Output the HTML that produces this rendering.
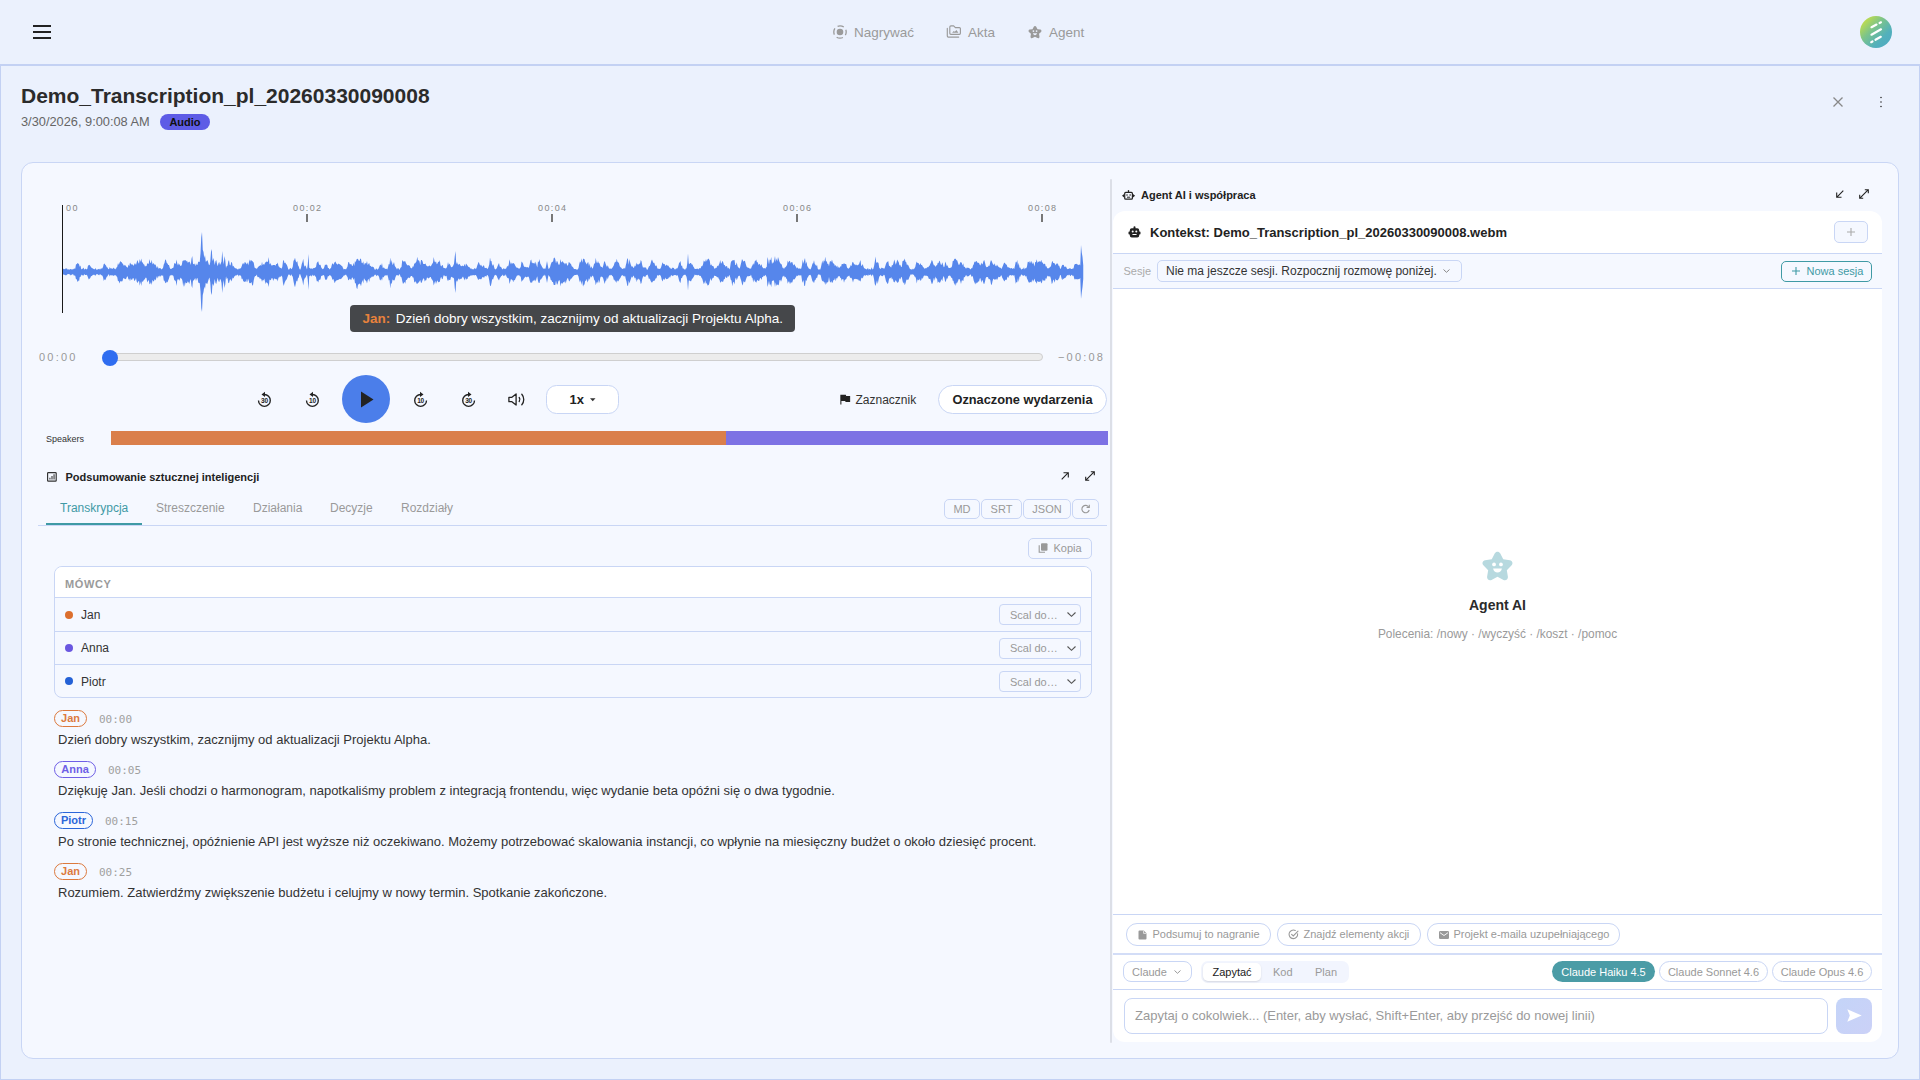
<!DOCTYPE html>
<html lang="pl">
<head>
<meta charset="utf-8">
<title>Demo_Transcription_pl_20260330090008</title>
<style>
*{box-sizing:border-box;margin:0;padding:0}
html,body{width:1920px;height:1080px;overflow:hidden;background:#ebf1fd}
body{font-family:"Liberation Sans",sans-serif;color:#333;position:relative}
.a{position:absolute;white-space:nowrap}
.mono{font-family:"Liberation Mono",monospace}
.dmono{font-family:"DejaVu Sans Mono","Liberation Mono",monospace}
svg{position:absolute;overflow:visible}
.ln{position:absolute;background:#c9d6f5}
.btn{position:absolute;border:1px solid #c9d6f5;background:#f5f8ff;color:#999;display:flex;align-items:center;justify-content:center;white-space:nowrap}
</style>
</head>
<body>
<!-- TOP BAR -->
<div class="a" id="topbar" style="left:0;top:0;width:1920px;height:65px;background:#ebf1fd"></div>
<div class="a" style="left:0;top:64px;width:1920px;height:2px;background:#c3d1f3"></div>
<!-- page frame -->
<div class="a" style="left:0;top:65px;width:1920px;height:1015px;border:1px solid #c3d1f3;border-top:none"></div>

<!-- hamburger -->
<div class="a" style="left:33px;top:25px;width:18px;height:2px;background:#222"></div>
<div class="a" style="left:33px;top:31px;width:18px;height:2px;background:#222"></div>
<div class="a" style="left:33px;top:37px;width:18px;height:2px;background:#222"></div>
<!-- nav -->
<svg style="left:833px;top:25.100px" width="14" height="14" viewBox="0 0 14 14"><circle cx="7" cy="7" r="6.200" fill="none" stroke="#9a9a9a" stroke-width="1.300" stroke-dasharray="6.500 3.240" stroke-dashoffset="3.250"/><circle cx="7" cy="7" r="3.300" fill="#9a9a9a"/></svg>
<div class="a" style="left:854px;top:24px;font-size:13.500px;line-height:17px;color:#9a9a9a">Nagrywać</div>
<svg style="left:946px;top:24px" width="16" height="14" viewBox="0 0 16 14" fill="none" stroke="#9a9a9a" stroke-width="1.150" stroke-linejoin="round" stroke-linecap="round"><path d="M3.800,3 Q3.800,1.800 5,1.800 L7.600,1.800 L9.400,3.600 L13.400,3.600 Q14.400,3.600 14.400,4.600 L14.400,9.300 Q14.400,10.300 13.400,10.300 L4.800,10.300 Q3.800,10.300 3.800,9.300 Z"/><path d="M1.300,4.400 L1.300,12.100 Q1.300,13.100 2.300,13.100 L12.700,13.100"/><path d="M6.100,8.700 L7.800,6.900 L8.800,7.800 L10.400,6.100 L12.400,8.700Z" fill="#9a9a9a" stroke="none"/></svg>
<div class="a" style="left:968px;top:24px;font-size:13.500px;line-height:17px;color:#9a9a9a">Akta</div>
<svg style="left:1028px;top:25px" width="14" height="14" viewBox="0 0 24 24"><path d="M12 1.5c.9 0 1.7.5 2.100 1.300l2.200 4.300 4.800.7c1.900.3 2.700 2.600 1.300 4l-3.500 3.400.8 4.800c.3 1.900-1.700 3.300-3.400 2.400L12 20.200l-4.300 2.200c-1.700.9-3.700-.5-3.400-2.400l.8-4.800-3.500-3.400c-1.400-1.400-.6-3.700 1.300-4l4.800-.7 2.200-4.300c.4-.8 1.200-1.300 2.100-1.300z" fill="#9a9a9a"/><circle cx="9.300" cy="10.300" r="1.500" fill="#ebf1fd"/><circle cx="14.700" cy="10.300" r="1.500" fill="#ebf1fd"/><path d="M8.500 14.200h7c-.3 1.900-1.800 3.200-3.500 3.200s-3.200-1.300-3.500-3.200z" fill="#ebf1fd"/></svg>
<div class="a" style="left:1049px;top:24px;font-size:13.500px;line-height:17px;color:#9a9a9a">Agent</div>
<!-- avatar -->
<div class="a" style="left:1860px;top:16px;width:32px;height:32px;border-radius:50%;background:linear-gradient(135deg,#d4e43a 5%,#7cc48a 40%,#52b0bc 70%,#4fa9c4 100%)"></div>
<svg style="left:1860px;top:16px" width="32" height="32" viewBox="0 0 32 32" stroke="#fff" stroke-width="2.200" stroke-linecap="round" fill="none"><path d="M11.500 11.200L16.500 8.600M19.600 7L21 6.300M11.500 18.700L21 13.300M11.200 26.200L12.500 25.500M15.500 23.800L20.800 20.800"/></svg>

<div class="a" style="left:21px;top:83px;font-size:21px;line-height:26px;font-weight:bold;color:#2b2b2b">Demo_Transcription_pl_20260330090008</div>
<div class="a" style="left:21px;top:114px;font-size:12.800px;line-height:16px;color:#666">3/30/2026, 9:00:08 AM</div>
<div class="a" style="left:159.700px;top:114.200px;width:50.600px;height:16.200px;border-radius:8.100px;background:#5e5ce6;color:#111;font-size:11px;line-height:16.200px;font-weight:bold;text-align:center">Audio</div>
<svg style="left:1833px;top:97px" width="10" height="10" viewBox="0 0 10 10" stroke="#888" stroke-width="1.3" fill="none"><path d="M0.500 0.500L9.500 9.500M9.500 0.500L0.500 9.500"/></svg>
<svg style="left:1879px;top:96px" width="4" height="12" viewBox="0 0 4 12" fill="#333"><circle cx="2" cy="1.500" r="0.800"/><circle cx="2" cy="6" r="0.800"/><circle cx="2" cy="10.500" r="0.800"/></svg>

<!-- main card -->
<div class="a" style="left:21px;top:162.400px;width:1878px;height:896.600px;background:#f5f8ff;border:1px solid #c9d6f5;border-radius:12px"></div>
<!-- timeline -->
<div class="a" style="left:66px;top:203px;font-size:9px;line-height:11px;color:#888;letter-spacing:1.400px">00</div>
<div class="a" style="left:293px;top:203px;font-size:9px;line-height:11px;color:#888;letter-spacing:1.400px">00:02</div>
<div class="a" style="left:538px;top:203px;font-size:9px;line-height:11px;color:#888;letter-spacing:1.400px">00:04</div>
<div class="a" style="left:783px;top:203px;font-size:9px;line-height:11px;color:#888;letter-spacing:1.400px">00:06</div>
<div class="a" style="left:1028px;top:203px;font-size:9px;line-height:11px;color:#888;letter-spacing:1.400px">00:08</div>
<div class="a" style="left:306.2px;top:214px;width:1.500px;height:8px;background:#777"></div>
<div class="a" style="left:551.2px;top:214px;width:1.500px;height:8px;background:#777"></div>
<div class="a" style="left:796.2px;top:214px;width:1.500px;height:8px;background:#777"></div>
<div class="a" style="left:1041.2px;top:214px;width:1.500px;height:8px;background:#777"></div>
<svg style="left:0;top:0" width="1920" height="400" viewBox="0 0 1920 400"><path fill="#5686eb" d="M62.5,269.1 63.25,268.8 64,269.1 64.75,269.3 65.5,268.5 66.25,268.4 67,268.6 67.75,269.8 68.5,269.3 69.25,269.7 70,269.3 70.75,269.0 71.5,269.5 72.25,269.3 73,269.4 73.75,268.8 74.5,268.6 75.25,268.7 76,264.3 76.75,264.2 77.5,262.9 78.25,263.5 79,264.2 79.75,266.7 80.5,265.6 81.25,269.6 82,268.8 82.75,268.7 83.5,267.4 84.25,269.4 85,269.3 85.75,268.6 86.5,269.5 87.25,269.1 88,265.5 88.75,265.2 89.5,264.7 90.25,265.9 91,266.9 91.75,268.0 92.5,268.2 93.25,268.8 94,269.3 94.75,269.2 95.5,267.9 96.25,269.8 97,269.5 97.75,269.6 98.5,269.0 99.25,268.8 100,269.7 100.75,268.5 101.5,268.5 102.25,268.6 103,266.9 103.75,263.9 104.5,263.4 105.25,264.7 106,265.6 106.75,267.2 107.5,267.6 108.25,269.1 109,269.2 109.75,267.1 110.5,268.5 111.25,268.3 112,268.8 112.75,268.7 113.5,267.5 114.25,269.1 115,268.2 115.75,269.4 116.5,267.6 117.25,266.7 118,263.1 118.75,265.0 119.5,262.9 120.25,261.1 121,261.9 121.75,262.2 122.5,263.4 123.25,264.5 124,266.0 124.75,264.8 125.5,265.5 126.25,266.6 127,267.3 127.75,267.8 128.5,264.6 129.25,266.2 130,262.6 130.75,263.8 131.5,264.4 132.25,264.4 133,264.7 133.75,266.0 134.5,263.5 135.25,263.4 136,265.1 136.75,262.2 137.5,260.0 138.25,262.6 139,263.8 139.75,259.1 140.5,261.9 141.25,258.4 142,262.2 142.75,262.6 143.5,264.2 144.25,264.6 145,266.7 145.75,265.7 146.5,266.3 147.25,263.0 148,264.1 148.75,263.5 149.5,259.0 150.25,262.7 151,262.9 151.75,259.8 152.5,264.4 153.25,263.1 154,264.0 154.75,264.8 155.5,264.6 156.25,266.5 157,268.2 157.75,266.0 158.5,268.7 159.25,268.2 160,268.1 160.75,268.4 161.5,269.4 162.25,268.7 163,268.1 163.75,264.6 164.5,263.1 165.25,259.3 166,260.2 166.75,263.0 167.5,263.6 168.25,265.0 169,265.0 169.75,267.7 170.5,269.0 171.25,268.9 172,268.3 172.75,268.1 173.5,267.4 174.25,263.2 175,263.2 175.75,264.0 176.5,259.5 177.25,263.5 178,265.5 178.75,263.2 179.5,264.4 180.25,265.7 181,266.1 181.75,265.1 182.5,261.0 183.25,260.5 184,260.4 184.75,260.3 185.5,260.1 186.25,261.4 187,260.5 187.75,262.8 188.5,262.3 189.25,261.4 190,262.5 190.75,264.9 191.5,258.8 192.25,256.0 193,263.7 193.75,264.3 194.5,263.4 195.25,266.3 196,263.3 196.75,265.0 197.5,264.8 198.25,261.4 199,262.0 199.75,261.7 200.5,253.2 201.25,237.2 202,232.0 202.75,249.8 203.5,252.0 204.25,258.0 205,255.0 205.75,261.7 206.5,261.2 207.25,260.0 208,261.6 208.75,264.4 209.5,265.3 210.25,262.1 211,251.7 211.75,249.0 212.5,261.3 213.25,258.0 214,260.7 214.75,265.1 215.5,261.2 216.25,260.0 217,263.7 217.75,266.2 218.5,262.9 219.25,262.0 220,265.0 220.75,263.6 221.5,261.5 222.25,251.0 223,259.8 223.75,264.4 224.5,256.0 225.25,259.9 226,267.9 226.75,266.1 227.5,265.8 228.25,261.4 229,260.0 229.75,265.1 230.5,265.5 231.25,261.9 232,262.5 232.75,266.5 233.5,265.8 234.25,267.6 235,267.7 235.75,268.4 236.5,268.6 237.25,269.0 238,269.7 238.75,268.5 239.5,268.7 240.25,268.4 241,268.0 241.75,266.0 242.5,263.8 243.25,263.0 244,264.4 244.75,262.1 245.5,262.5 246.25,263.4 247,264.5 247.75,262.2 248.5,265.6 249.25,259.3 250,262.1 250.75,260.1 251.5,260.5 252.25,260.9 253,261.8 253.75,262.8 254.5,267.2 255.25,268.6 256,267.8 256.75,269.2 257.5,267.8 258.25,267.1 259,266.0 259.75,265.7 260.5,265.0 261.25,266.1 262,261.7 262.75,265.3 263.5,264.1 264.25,264.8 265,263.0 265.75,261.9 266.5,261.4 267.25,262.1 268,261.4 268.75,256.9 269.5,264.6 270.25,263.1 271,264.4 271.75,265.7 272.5,265.2 273.25,264.9 274,265.0 274.75,265.1 275.5,265.7 276.25,263.9 277,263.9 277.75,262.6 278.5,266.3 279.25,266.8 280,267.9 280.75,267.7 281.5,268.8 282.25,266.9 283,261.2 283.75,259.8 284.5,263.2 285.25,262.5 286,263.8 286.75,264.7 287.5,266.5 288.25,269.3 289,269.7 289.75,268.5 290.5,267.8 291.25,269.2 292,268.5 292.75,266.7 293.5,260.7 294.25,259.9 295,257.7 295.75,260.9 296.5,262.6 297.25,261.0 298,265.2 298.75,266.6 299.5,269.1 300.25,269.7 301,267.8 301.75,263.9 302.5,262.1 303.25,258.7 304,265.0 304.75,266.7 305.5,265.2 306.25,267.5 307,269.4 307.75,264.4 308.5,254.0 309.25,267.8 310,268.3 310.75,268.7 311.5,268.2 312.25,269.3 313,268.1 313.75,268.2 314.5,268.1 315.25,267.4 316,267.1 316.75,262.9 317.5,262.1 318.25,261.2 319,264.6 319.75,264.9 320.5,264.7 321.25,267.5 322,268.5 322.75,269.3 323.5,268.8 324.25,267.3 325,264.4 325.75,265.1 326.5,264.5 327.25,265.1 328,267.9 328.75,268.1 329.5,269.4 330.25,268.6 331,268.0 331.75,264.9 332.5,263.0 333.25,264.8 334,263.5 334.75,262.1 335.5,261.6 336.25,263.4 337,264.1 337.75,264.7 338.5,263.5 339.25,264.0 340,264.4 340.75,265.1 341.5,265.8 342.25,266.3 343,268.0 343.75,269.4 344.5,269.1 345.25,268.9 346,269.5 346.75,267.9 347.5,266.5 348.25,262.2 349,262.1 349.75,264.3 350.5,264.2 351.25,263.9 352,265.7 352.75,265.9 353.5,262.8 354.25,265.9 355,260.8 355.75,262.6 356.5,259.4 357.25,258.7 358,259.1 358.75,260.8 359.5,260.9 360.25,258.4 361,258.9 361.75,263.1 362.5,263.3 363.25,261.3 364,265.2 364.75,263.3 365.5,263.3 366.25,263.4 367,261.0 367.75,265.3 368.5,263.8 369.25,263.1 370,266.0 370.75,265.8 371.5,267.1 372.25,266.5 373,267.1 373.75,267.3 374.5,269.2 375.25,270.0 376,268.5 376.75,268.7 377.5,269.7 378.25,269.0 379,267.4 379.75,265.4 380.5,264.6 381.25,265.7 382,263.1 382.75,268.0 383.5,267.5 384.25,267.7 385,268.9 385.75,268.7 386.5,268.7 387.25,269.6 388,267.2 388.75,263.9 389.5,264.4 390.25,257.6 391,263.3 391.75,260.0 392.5,264.9 393.25,263.9 394,261.9 394.75,265.8 395.5,267.1 396.25,268.0 397,269.4 397.75,268.1 398.5,268.2 399.25,269.9 400,268.8 400.75,267.4 401.5,266.9 402.25,260.1 403,261.0 403.75,261.7 404.5,261.3 405.25,261.2 406,263.3 406.75,264.6 407.5,265.5 408.25,264.9 409,265.5 409.75,265.8 410.5,267.8 411.25,268.2 412,268.3 412.75,266.3 413.5,266.7 414.25,263.4 415,263.6 415.75,262.6 416.5,261.3 417.25,256.7 418,260.7 418.75,259.9 419.5,261.4 420.25,265.2 421,260.1 421.75,260.1 422.5,261.2 423.25,264.1 424,264.1 424.75,264.0 425.5,263.5 426.25,265.4 427,266.0 427.75,266.4 428.5,266.2 429.25,265.5 430,265.8 430.75,266.4 431.5,265.0 432.25,263.7 433,262.4 433.75,257.1 434.5,261.3 435.25,262.4 436,261.3 436.75,264.3 437.5,263.4 438.25,261.6 439,262.3 439.75,259.9 440.5,265.3 441.25,266.5 442,265.3 442.75,265.0 443.5,268.0 444.25,268.1 445,268.3 445.75,268.4 446.5,268.0 447.25,265.9 448,262.1 448.75,264.9 449.5,263.6 450.25,264.9 451,267.0 451.75,267.2 452.5,266.7 453.25,265.6 454,263.8 454.75,256.5 455.5,251.0 456.25,264.2 457,262.0 457.75,264.2 458.5,264.7 459.25,263.8 460,264.6 460.75,265.9 461.5,266.3 462.25,265.4 463,266.0 463.75,266.3 464.5,263.7 465.25,266.4 466,263.5 466.75,264.6 467.5,265.4 468.25,266.7 469,267.0 469.75,267.6 470.5,268.7 471.25,268.2 472,269.4 472.75,269.1 473.5,269.4 474.25,268.6 475,268.1 475.75,269.2 476.5,267.9 477.25,265.5 478,263.4 478.75,261.7 479.5,264.0 480.25,265.8 481,264.4 481.75,266.0 482.5,267.0 483.25,265.6 484,265.5 484.75,267.9 485.5,267.9 486.25,267.8 487,268.4 487.75,268.9 488.5,266.9 489.25,264.5 490,257.4 490.75,261.3 491.5,260.9 492.25,265.9 493,264.0 493.75,265.6 494.5,268.4 495.25,269.5 496,269.1 496.75,268.3 497.5,266.2 498.25,264.6 499,262.9 499.75,266.5 500.5,266.8 501.25,267.2 502,268.8 502.75,269.4 503.5,268.0 504.25,269.3 505,268.3 505.75,269.2 506.5,267.8 507.25,265.7 508,266.7 508.75,264.4 509.5,259.3 510.25,262.4 511,264.5 511.75,262.6 512.5,263.8 513.25,262.9 514,263.6 514.75,264.6 515.5,266.3 516.25,267.1 517,268.3 517.75,267.6 518.5,268.6 519.25,268.8 520,268.1 520.75,267.0 521.5,261.4 522.25,262.3 523,263.5 523.75,266.1 524.5,267.0 525.25,266.8 526,267.2 526.75,267.2 527.5,267.0 528.25,267.9 529,267.1 529.75,264.3 530.5,260.5 531.25,259.4 532,263.6 532.75,262.4 533.5,263.4 534.25,262.4 535,264.3 535.75,261.6 536.5,265.1 537.25,267.4 538,261.0 538.75,262.6 539.5,259.1 540.25,263.5 541,264.7 541.75,266.2 542.5,267.4 543.25,269.0 544,268.0 544.75,269.1 545.5,268.6 546.25,265.1 547,261.0 547.75,265.1 548.5,269.0 549.25,268.6 550,267.3 550.75,264.5 551.5,262.4 552.25,261.8 553,261.7 553.75,258.0 554.5,257.4 555.25,259.0 556,263.4 556.75,261.1 557.5,261.4 558.25,263.7 559,265.3 559.75,263.8 560.5,258.9 561.25,262.5 562,262.1 562.75,260.9 563.5,262.8 564.25,262.9 565,264.4 565.75,262.9 566.5,263.3 567.25,265.6 568,265.4 568.75,262.1 569.5,262.4 570.25,263.4 571,264.0 571.75,266.3 572.5,266.7 573.25,267.5 574,269.0 574.75,268.9 575.5,269.0 576.25,269.5 577,269.4 577.75,269.4 578.5,268.0 579.25,264.1 580,261.3 580.75,262.8 581.5,258.3 582.25,262.7 583,259.3 583.75,258.6 584.5,259.2 585.25,261.9 586,262.9 586.75,264.6 587.5,262.7 588.25,261.9 589,266.3 589.75,263.2 590.5,268.2 591.25,266.2 592,267.7 592.75,268.7 593.5,266.0 594.25,263.2 595,263.8 595.75,257.8 596.5,262.3 597.25,263.3 598,261.1 598.75,263.0 599.5,263.3 600.25,265.8 601,267.0 601.75,266.8 602.5,267.9 603.25,265.6 604,262.3 604.75,261.0 605.5,263.5 606.25,265.6 607,267.0 607.75,265.2 608.5,267.3 609.25,268.9 610,268.0 610.75,268.9 611.5,268.7 612.25,268.0 613,266.7 613.75,265.4 614.5,263.0 615.25,261.6 616,262.4 616.75,258.8 617.5,262.1 618.25,262.3 619,263.3 619.75,266.2 620.5,267.3 621.25,267.7 622,268.8 622.75,269.1 623.5,268.4 624.25,267.8 625,269.1 625.75,265.6 626.5,262.6 627.25,258.0 628,259.5 628.75,264.8 629.5,259.1 630.25,262.7 631,265.3 631.75,266.7 632.5,266.3 633.25,267.8 634,267.8 634.75,265.6 635.5,266.4 636.25,262.5 637,265.1 637.75,263.7 638.5,264.8 639.25,263.5 640,263.8 640.75,260.0 641.5,261.3 642.25,265.2 643,267.8 643.75,267.2 644.5,267.6 645.25,267.6 646,267.4 646.75,269.6 647.5,269.8 648.25,267.9 649,266.2 649.75,266.0 650.5,264.1 651.25,260.9 652,259.4 652.75,261.6 653.5,263.1 654.25,262.7 655,265.0 655.75,266.2 656.5,265.2 657.25,268.0 658,269.0 658.75,268.5 659.5,269.0 660.25,268.7 661,267.5 661.75,265.0 662.5,262.2 663.25,263.8 664,264.3 664.75,264.0 665.5,266.3 666.25,264.4 667,265.4 667.75,265.4 668.5,265.8 669.25,267.4 670,267.5 670.75,268.8 671.5,269.1 672.25,267.6 673,268.1 673.75,267.7 674.5,269.2 675.25,269.5 676,268.4 676.75,268.6 677.5,268.2 678.25,266.3 679,263.2 679.75,262.2 680.5,260.9 681.25,266.2 682,265.3 682.75,268.4 683.5,268.6 684.25,269.1 685,270.1 685.75,268.5 686.5,268.2 687.25,263.6 688,253.5 688.75,263.6 689.5,263.9 690.25,263.0 691,262.9 691.75,264.5 692.5,264.4 693.25,266.4 694,267.5 694.75,269.1 695.5,269.0 696.25,268.7 697,268.9 697.75,268.6 698.5,269.5 699.25,267.9 700,268.6 700.75,268.0 701.5,266.0 702.25,266.3 703,264.6 703.75,260.4 704.5,261.6 705.25,261.8 706,259.0 706.75,261.4 707.5,259.5 708.25,258.6 709,259.2 709.75,260.8 710.5,265.5 711.25,264.3 712,265.7 712.75,266.1 713.5,266.2 714.25,268.6 715,268.8 715.75,267.8 716.5,267.9 717.25,265.6 718,266.6 718.75,265.0 719.5,263.2 720.25,259.9 721,263.7 721.75,262.8 722.5,260.8 723.25,262.6 724,265.0 724.75,265.0 725.5,266.8 726.25,266.3 727,266.1 727.75,268.6 728.5,267.4 729.25,269.4 730,268.0 730.75,262.7 731.5,260.9 732.25,260.8 733,259.8 733.75,260.4 734.5,259.8 735.25,265.1 736,265.0 736.75,262.3 737.5,265.9 738.25,267.5 739,267.7 739.75,268.7 740.5,265.6 741.25,262.4 742,259.1 742.75,260.3 743.5,261.8 744.25,260.7 745,260.9 745.75,264.1 746.5,266.4 747.25,267.5 748,267.6 748.75,268.1 749.5,268.6 750.25,268.6 751,268.7 751.75,266.4 752.5,265.2 753.25,263.3 754,265.0 754.75,261.3 755.5,260.7 756.25,259.5 757,262.6 757.75,262.0 758.5,264.9 759.25,263.7 760,264.5 760.75,266.0 761.5,263.9 762.25,267.1 763,267.8 763.75,268.4 764.5,268.1 765.25,268.8 766,267.4 766.75,266.7 767.5,257.0 768.25,260.1 769,264.6 769.75,259.5 770.5,260.2 771.25,257.0 772,263.9 772.75,262.4 773.5,262.7 774.25,259.9 775,255.9 775.75,262.0 776.5,258.2 777.25,261.6 778,257.0 778.75,259.2 779.5,261.7 780.25,263.2 781,264.1 781.75,264.6 782.5,267.7 783.25,267.8 784,268.9 784.75,267.5 785.5,267.3 786.25,266.3 787,265.1 787.75,260.6 788.5,262.7 789.25,260.7 790,261.3 790.75,263.4 791.5,262.0 792.25,262.1 793,264.3 793.75,265.4 794.5,263.9 795.25,266.0 796,266.8 796.75,268.6 797.5,267.2 798.25,269.0 799,268.1 799.75,268.8 800.5,268.7 801.25,268.6 802,264.9 802.75,259.6 803.5,263.8 804.25,260.3 805,258.0 805.75,263.9 806.5,261.5 807.25,265.9 808,266.9 808.75,268.5 809.5,268.7 810.25,269.5 811,268.5 811.75,266.3 812.5,263.5 813.25,263.2 814,260.2 814.75,264.1 815.5,264.7 816.25,266.2 817,264.6 817.75,268.7 818.5,269.7 819.25,269.1 820,270.0 820.75,268.1 821.5,264.5 822.25,260.6 823,263.8 823.75,260.2 824.5,261.6 825.25,256.7 826,261.8 826.75,261.1 827.5,264.0 828.25,263.8 829,266.3 829.75,261.7 830.5,260.9 831.25,262.1 832,259.4 832.75,262.5 833.5,263.5 834.25,264.1 835,266.3 835.75,264.8 836.5,266.9 837.25,265.6 838,268.2 838.75,266.5 839.5,268.2 840.25,266.0 841,266.9 841.75,263.9 842.5,263.9 843.25,264.3 844,262.9 844.75,263.9 845.5,264.0 846.25,264.3 847,267.5 847.75,268.3 848.5,268.7 849.25,268.0 850,266.9 850.75,265.0 851.5,266.2 852.25,262.6 853,261.7 853.75,263.6 854.5,264.5 855.25,264.4 856,265.4 856.75,264.5 857.5,265.4 858.25,264.8 859,264.3 859.75,262.1 860.5,260.0 861.25,265.9 862,265.4 862.75,264.0 863.5,266.8 864.25,268.3 865,268.5 865.75,268.9 866.5,269.4 867.25,268.7 868,268.1 868.75,269.8 869.5,268.8 870.25,269.7 871,269.0 871.75,267.3 872.5,269.4 873.25,269.0 874,266.3 874.75,262.1 875.5,256.6 876.25,262.7 877,262.4 877.75,262.2 878.5,262.9 879.25,267.7 880,268.6 880.75,268.9 881.5,267.5 882.25,268.3 883,267.8 883.75,268.8 884.5,268.6 885.25,266.3 886,263.8 886.75,262.3 887.5,261.8 888.25,260.9 889,265.8 889.75,266.0 890.5,267.1 891.25,267.4 892,264.7 892.75,265.6 893.5,263.1 894.25,259.5 895,261.9 895.75,264.7 896.5,262.4 897.25,259.5 898,261.1 898.75,262.2 899.5,265.4 900.25,264.7 901,266.8 901.75,267.0 902.5,261.2 903.25,260.8 904,260.6 904.75,258.5 905.5,261.7 906.25,262.3 907,265.4 907.75,264.2 908.5,265.7 909.25,267.4 910,268.9 910.75,269.3 911.5,269.4 912.25,269.5 913,268.5 913.75,269.4 914.5,268.2 915.25,266.9 916,263.4 916.75,261.4 917.5,263.1 918.25,263.0 919,263.7 919.75,265.2 920.5,263.0 921.25,264.9 922,264.9 922.75,266.4 923.5,267.2 924.25,268.7 925,268.3 925.75,268.3 926.5,268.3 927.25,267.0 928,267.4 928.75,266.5 929.5,265.8 930.25,264.1 931,262.6 931.75,260.0 932.5,261.0 933.25,263.7 934,265.4 934.75,265.3 935.5,266.9 936.25,265.3 937,265.4 937.75,262.7 938.5,263.3 939.25,260.6 940,261.8 940.75,264.6 941.5,265.0 942.25,262.3 943,264.8 943.75,267.2 944.5,266.4 945.25,261.6 946,263.4 946.75,266.0 947.5,265.3 948.25,267.6 949,267.9 949.75,268.0 950.5,267.7 951.25,267.5 952,266.3 952.75,261.1 953.5,261.1 954.25,259.3 955,258.4 955.75,259.1 956.5,260.3 957.25,260.6 958,263.1 958.75,265.0 959.5,264.5 960.25,262.2 961,262.3 961.75,262.7 962.5,265.4 963.25,263.3 964,267.2 964.75,266.4 965.5,268.2 966.25,268.6 967,267.3 967.75,268.0 968.5,267.8 969.25,268.2 970,268.8 970.75,269.5 971.5,268.0 972.25,268.2 973,265.6 973.75,264.3 974.5,261.4 975.25,262.2 976,261.1 976.75,261.3 977.5,262.8 978.25,262.8 979,262.9 979.75,264.8 980.5,265.6 981.25,262.4 982,264.6 982.75,263.8 983.5,261.0 984.25,260.0 985,262.7 985.75,266.1 986.5,267.3 987.25,267.0 988,266.8 988.75,265.4 989.5,266.0 990.25,262.3 991,260.0 991.75,261.3 992.5,263.3 993.25,264.4 994,265.1 994.75,263.2 995.5,265.9 996.25,266.2 997,264.6 997.75,266.1 998.5,266.7 999.25,267.6 1000,267.5 1000.75,268.0 1001.5,269.0 1002.25,267.3 1003,265.4 1003.75,263.4 1004.5,262.6 1005.25,263.5 1006,264.5 1006.75,264.8 1007.5,267.2 1008.25,267.2 1009,267.5 1009.75,268.1 1010.5,268.5 1011.25,268.0 1012,268.2 1012.75,269.0 1013.5,268.1 1014.25,269.1 1015,265.6 1015.75,261.7 1016.5,262.6 1017.25,259.9 1018,265.7 1018.75,262.7 1019.5,267.7 1020.25,267.4 1021,269.3 1021.75,269.4 1022.5,268.7 1023.25,268.8 1024,267.2 1024.75,269.4 1025.5,268.0 1026.25,268.2 1027,266.4 1027.75,261.8 1028.5,262.2 1029.25,261.0 1030,263.4 1030.75,261.6 1031.5,261.3 1032.25,264.3 1033,261.9 1033.75,263.8 1034.5,266.4 1035.25,262.1 1036,261.9 1036.75,259.3 1037.5,263.0 1038.25,261.4 1039,262.0 1039.75,260.9 1040.5,261.9 1041.25,259.7 1042,262.5 1042.75,262.5 1043.5,264.3 1044.25,263.9 1045,263.4 1045.75,266.4 1046.5,266.3 1047.25,268.4 1048,268.1 1048.75,268.5 1049.5,267.5 1050.25,266.9 1051,265.9 1051.75,262.6 1052.5,260.7 1053.25,263.0 1054,263.0 1054.75,263.4 1055.5,265.4 1056.25,263.2 1057,264.6 1057.75,263.1 1058.5,265.7 1059.25,265.7 1060,268.2 1060.75,269.1 1061.5,266.6 1062.25,265.0 1063,264.7 1063.75,264.9 1064.5,267.1 1065.25,266.8 1066,266.5 1066.75,268.2 1067.5,269.3 1068.25,268.8 1069,268.9 1069.75,268.0 1070.5,268.6 1071.25,269.1 1072,269.1 1072.75,268.5 1073.5,268.5 1074.25,265.1 1075,263.9 1075.75,263.9 1076.5,263.7 1077.25,264.5 1078,264.4 1078.75,265.2 1079.5,264.3 1080.25,265.6 1081,245.0 1081.75,252.5 1082.5,257.0 1083.25,265.3 1083.25,278.9 1082.5,287.0 1081.75,292.4 1081,299.0 1080.25,277.8 1079.5,279.0 1078.75,279.3 1078,279.1 1077.25,279.4 1076.5,279.3 1075.75,278.8 1075,279.8 1074.25,278.7 1073.5,275.5 1072.75,276.2 1072,274.8 1071.25,275.1 1070.5,276.3 1069.75,275.2 1069,274.6 1068.25,275.4 1067.5,275.0 1066.75,275.8 1066,276.9 1065.25,277.9 1064.5,278.1 1063.75,279.3 1063,278.2 1062.25,280.3 1061.5,278.3 1060.75,275.1 1060,275.2 1059.25,278.0 1058.5,278.9 1057.75,280.4 1057,280.1 1056.25,280.2 1055.5,278.5 1054.75,282.7 1054,280.5 1053.25,279.4 1052.5,283.0 1051.75,283.9 1051,278.9 1050.25,276.5 1049.5,276.6 1048.75,276.1 1048,276.7 1047.25,275.6 1046.5,278.9 1045.75,277.9 1045,280.9 1044.25,280.2 1043.5,280.7 1042.75,279.3 1042,282.3 1041.25,283.5 1040.5,281.0 1039.75,282.0 1039,281.4 1038.25,282.1 1037.5,280.8 1036.75,283.7 1036,282.0 1035.25,281.4 1034.5,278.6 1033.75,280.2 1033,281.8 1032.25,279.2 1031.5,282.2 1030.75,282.3 1030,281.7 1029.25,283.0 1028.5,282.1 1027.75,280.1 1027,278.5 1026.25,275.7 1025.5,276.8 1024.75,274.8 1024,275.9 1023.25,275.4 1022.5,275.6 1021.75,274.4 1021,274.7 1020.25,276.7 1019.5,276.6 1018.75,281.9 1018,278.1 1017.25,282.3 1016.5,282.0 1015.75,283.8 1015,278.7 1014.25,274.9 1013.5,275.7 1012.75,275.1 1012,275.5 1011.25,275.4 1010.5,274.9 1009.75,275.3 1009,276.1 1008.25,278.0 1007.5,276.5 1006.75,279.4 1006,280.2 1005.25,279.5 1004.5,281.5 1003.75,280.4 1003,279.0 1002.25,277.7 1001.5,275.2 1000.75,275.7 1000,277.2 999.25,276.9 998.5,276.7 997.75,278.6 997,280.3 996.25,278.4 995.5,279.6 994.75,280.0 994,278.8 993.25,278.9 992.5,281.3 991.75,285.0 991,284.2 990.25,280.1 989.5,278.9 988.75,279.2 988,277.2 987.25,277.0 986.5,277.1 985.75,278.1 985,281.6 984.25,284.0 983.5,283.4 982.75,280.5 982,280.3 981.25,282.7 980.5,278.2 979.75,278.4 979,281.7 978.25,281.3 977.5,282.4 976.75,283.5 976,282.2 975.25,284.4 974.5,282.4 973.75,280.7 973,277.2 972.25,275.7 971.5,277.0 970.75,274.3 970,275.1 969.25,275.6 968.5,276.2 967.75,276.3 967,276.6 966.25,274.9 965.5,275.8 964.75,277.4 964,276.8 963.25,281.2 962.5,280.2 961.75,280.6 961,283.9 960.25,280.9 959.5,278.9 958.75,279.0 958,281.0 957.25,282.8 956.5,282.7 955.75,286.0 955,282.7 954.25,284.9 953.5,280.7 952.75,280.8 952,277.6 951.25,278.0 950.5,276.0 949.75,275.5 949,275.8 948.25,276.1 947.5,278.8 946.75,278.2 946,280.7 945.25,282.3 944.5,278.6 943.75,276.0 943,277.4 942.25,281.2 941.5,278.9 940.75,281.0 940,282.8 939.25,282.6 938.5,281.5 937.75,282.9 937,278.5 936.25,278.6 935.5,276.4 934.75,280.8 934,277.6 933.25,280.5 932.5,283.4 931.75,284.0 931,281.6 930.25,278.8 929.5,279.1 928.75,278.7 928,276.5 927.25,276.1 926.5,275.7 925.75,275.5 925,276.1 924.25,275.2 923.5,276.6 922.75,278.9 922,277.5 921.25,280.1 920.5,281.0 919.75,278.5 919,280.6 918.25,279.7 917.5,279.6 916.75,283.5 916,278.6 915.25,276.7 914.5,276.5 913.75,274.5 913,274.9 912.25,274.0 911.5,274.7 910.75,274.3 910,275.8 909.25,277.6 908.5,279.4 907.75,280.1 907,279.3 906.25,280.3 905.5,283.2 904.75,285.2 904,282.0 903.25,283.5 902.5,280.7 901.75,276.7 901,277.4 900.25,279.5 899.5,278.1 898.75,281.5 898,282.4 897.25,282.7 896.5,281.4 895.75,280.0 895,281.5 894.25,282.5 893.5,281.5 892.75,278.3 892,279.8 891.25,277.0 890.5,278.2 889.75,277.9 889,279.2 888.25,282.9 887.5,284.0 886.75,282.6 886,281.2 885.25,278.0 884.5,275.0 883.75,274.7 883,276.0 882.25,276.3 881.5,275.9 880.75,274.9 880,275.8 879.25,276.8 878.5,280.0 877.75,284.1 877,280.2 876.25,283.2 875.5,286.1 874.75,284.1 874,278.9 873.25,275.5 872.5,274.2 871.75,276.6 871,274.8 870.25,274.5 869.5,275.2 868.75,274.4 868,276.3 867.25,274.9 866.5,275.0 865.75,275.4 865,275.7 864.25,275.1 863.5,276.3 862.75,278.4 862,277.4 861.25,278.2 860.5,281.8 859.75,280.2 859,280.9 858.25,279.5 857.5,279.4 856.75,278.9 856,279.2 855.25,278.7 854.5,279.0 853.75,279.6 853,282.4 852.25,279.8 851.5,277.7 850.75,277.9 850,277.5 849.25,275.4 848.5,276.1 847.75,276.5 847,276.9 846.25,279.1 845.5,279.6 844.75,279.9 844,282.7 843.25,279.1 842.5,279.1 841.75,280.8 841,278.3 840.25,277.7 839.5,276.1 838.75,276.2 838,276.5 837.25,278.5 836.5,277.9 835.75,281.3 835,278.0 834.25,280.1 833.5,280.0 832.75,282.3 832,283.0 831.25,281.1 830.5,282.8 829.75,281.2 829,277.1 828.25,281.8 827.5,282.0 826.75,284.0 826,281.8 825.25,285.1 824.5,282.3 823.75,282.1 823,280.6 822.25,281.6 821.5,279.0 820.75,275.5 820,274.4 819.25,274.7 818.5,274.2 817.75,275.3 817,278.5 816.25,277.4 815.5,280.1 814.75,280.2 814,283.2 813.25,281.6 812.5,281.4 811.75,278.7 811,275.8 810.25,274.7 809.5,275.0 808.75,275.4 808,277.1 807.25,277.9 806.5,281.1 805.75,279.9 805,286.0 804.25,285.7 803.5,279.8 802.75,282.8 802,280.4 801.25,275.3 800.5,275.6 799.75,274.9 799,276.1 798.25,274.7 797.5,276.2 796.75,275.5 796,276.9 795.25,278.3 794.5,279.6 793.75,278.9 793,280.0 792.25,282.6 791.5,282.6 790.75,282.3 790,284.2 789.25,281.4 788.5,281.6 787.75,283.7 787,279.3 786.25,278.4 785.5,276.8 784.75,277.5 784,275.5 783.25,276.4 782.5,276.4 781.75,279.7 781,281.7 780.25,279.8 779.5,280.2 778.75,285.6 778,284.6 777.25,284.7 776.5,285.7 775.75,282.4 775,287.0 774.25,282.1 773.5,280.0 772.75,281.0 772,280.4 771.25,287.0 770.5,284.2 769.75,284.7 769,280.8 768.25,284.2 767.5,287.0 766.75,277.6 766,275.7 765.25,274.8 764.5,276.3 763.75,275.5 763,276.9 762.25,276.9 761.5,280.1 760.75,278.0 760,278.3 759.25,280.7 758.5,280.9 757.75,280.0 757,280.4 756.25,282.7 755.5,281.8 754.75,280.9 754,279.0 753.25,282.4 752.5,278.0 751.75,277.5 751,274.6 750.25,276.0 749.5,276.0 748.75,276.2 748,276.2 747.25,276.3 746.5,277.8 745.75,280.0 745,282.5 744.25,281.8 743.5,281.2 742.75,285.4 742,283.9 741.25,280.8 740.5,278.5 739.75,275.7 739,275.8 738.25,276.2 737.5,278.2 736.75,280.3 736,277.6 735.25,279.1 734.5,284.5 733.75,281.8 733,282.6 732.25,286.2 731.5,280.5 730.75,279.7 730,276.6 729.25,274.8 728.5,277.0 727.75,276.0 727,278.0 726.25,277.7 725.5,276.3 724.75,279.3 724,279.0 723.25,281.4 722.5,282.1 721.75,280.9 721,282.0 720.25,282.8 719.5,279.7 718.75,278.8 718,277.0 717.25,277.5 716.5,276.5 715.75,275.9 715,276.0 714.25,275.4 713.5,277.9 712.75,277.7 712,279.2 711.25,280.9 710.5,278.1 709.75,281.2 709,284.6 708.25,285.3 707.5,285.5 706.75,282.4 706,284.3 705.25,280.2 704.5,283.1 703.75,284.0 703,281.4 702.25,278.8 701.5,277.7 700.75,276.1 700,275.7 699.25,275.7 698.5,274.7 697.75,275.5 697,274.7 696.25,275.2 695.5,275.0 694.75,274.4 694,276.3 693.25,277.4 692.5,278.5 691.75,279.5 691,281.6 690.25,281.0 689.5,280.5 688.75,280.5 688,290.5 687.25,280.5 686.5,276.7 685.75,275.2 685,274.5 684.25,275.0 683.5,275.2 682.75,276.0 682,278.1 681.25,277.9 680.5,282.9 679.75,282.1 679,280.3 678.25,277.1 677.5,274.9 676.75,275.7 676,275.2 675.25,275.0 674.5,275.0 673.75,275.5 673,275.5 672.25,276.3 671.5,274.9 670.75,275.7 670,277.9 669.25,276.4 668.5,278.3 667.75,278.7 667,278.9 666.25,279.2 665.5,277.4 664.75,280.3 664,278.5 663.25,279.6 662.5,281.4 661.75,279.7 661,276.6 660.25,275.3 659.5,274.8 658.75,275.8 658,275.2 657.25,275.3 656.5,278.3 655.75,278.3 655,279.7 654.25,280.9 653.5,280.8 652.75,281.4 652,282.7 651.25,282.1 650.5,280.7 649.75,278.2 649,279.4 648.25,276.5 647.5,274.5 646.75,275.0 646,275.6 645.25,277.1 644.5,276.8 643.75,276.0 643,276.7 642.25,279.0 641.5,283.0 640.75,284.0 640,280.5 639.25,279.2 638.5,278.6 637.75,280.6 637,278.5 636.25,282.3 635.5,277.5 634.75,278.4 634,276.6 633.25,275.5 632.5,277.7 631.75,276.5 631,278.5 630.25,280.8 629.5,283.6 628.75,280.6 628,286.0 627.25,285.4 626.5,281.4 625.75,279.1 625,275.6 624.25,276.8 623.5,275.9 622.75,275.3 622,275.2 621.25,276.1 620.5,277.7 619.75,278.7 619,280.1 618.25,281.5 617.5,280.2 616.75,283.1 616,280.3 615.25,282.0 614.5,279.8 613.75,279.7 613,276.6 612.25,276.0 611.5,274.9 610.75,274.8 610,275.8 609.25,274.9 608.5,277.0 607.75,279.4 607,277.1 606.25,280.4 605.5,280.7 604.75,284.0 604,281.5 603.25,278.6 602.5,277.1 601.75,276.7 601,276.4 600.25,277.7 599.5,283.2 598.75,279.4 598,283.6 597.25,281.5 596.5,282.7 595.75,285.2 595,280.8 594.25,280.1 593.5,276.9 592.75,275.4 592,276.2 591.25,277.5 590.5,276.0 589.75,280.1 589,278.0 588.25,280.7 587.5,282.4 586.75,278.8 586,281.1 585.25,280.6 584.5,284.5 583.75,284.7 583,286.8 582.25,280.4 581.5,285.1 580.75,280.0 580,282.4 579.25,280.2 578.5,276.5 577.75,275.0 577,274.4 576.25,274.9 575.5,274.9 574.75,275.0 574,275.5 573.25,276.3 572.5,277.0 571.75,278.4 571,278.6 570.25,279.8 569.5,281.5 568.75,280.4 568,278.0 567.25,278.4 566.5,280.5 565.75,283.5 565,280.7 564.25,282.6 563.5,282.1 562.75,283.0 562,284.0 561.25,282.5 560.5,286.5 559.75,280.4 559,280.2 558.25,281.4 557.5,284.5 556.75,284.3 556,280.6 555.25,285.1 554.5,284.9 553.75,285.0 553,282.1 552.25,282.0 551.5,280.3 550.75,279.9 550,276.9 549.25,276.2 548.5,275.0 547.75,279.1 547,283.0 546.25,279.1 545.5,275.9 544.75,274.4 544,276.2 543.25,275.3 542.5,277.3 541.75,278.2 541,279.4 540.25,279.5 539.5,282.9 538.75,283.1 538,280.9 537.25,276.3 536.5,278.3 535.75,281.5 535,279.3 534.25,280.7 533.5,280.6 532.75,280.7 532,282.7 531.25,282.4 530.5,282.8 529.75,280.8 529,277.4 528.25,276.6 527.5,276.7 526.75,277.5 526,276.7 525.25,276.7 524.5,277.7 523.75,278.8 523,280.2 522.25,280.5 521.5,282.0 520.75,276.5 520,276.4 519.25,275.2 518.5,275.2 517.75,275.6 517,275.4 516.25,277.1 515.5,278.5 514.75,280.6 514,279.8 513.25,282.3 512.5,280.1 511.75,279.8 511,278.7 510.25,281.4 509.5,284.0 508.75,278.2 508,278.3 507.25,277.7 506.5,276.4 505.75,274.2 505,276.0 504.25,275.2 503.5,276.2 502.75,274.4 502,275.7 501.25,276.0 500.5,277.2 499.75,278.3 499,280.6 498.25,279.3 497.5,278.0 496.75,275.8 496,275.3 495.25,274.7 494.5,275.6 493.75,277.2 493,279.7 492.25,278.7 491.5,283.1 490.75,286.2 490,285.4 489.25,280.4 488.5,276.8 487.75,275.2 487,275.1 486.25,276.7 485.5,275.9 484.75,276.2 484,278.0 483.25,277.1 482.5,277.0 481.75,278.4 481,279.4 480.25,278.9 479.5,278.7 478.75,279.8 478,279.6 477.25,277.7 476.5,276.0 475.75,275.1 475,275.1 474.25,275.6 473.5,275.0 472.75,275.4 472,275.1 471.25,275.8 470.5,275.4 469.75,276.1 469,276.9 468.25,276.2 467.5,279.0 466.75,278.7 466,280.1 465.25,277.4 464.5,280.5 463.75,278.2 463,276.6 462.25,277.5 461.5,278.8 460.75,279.3 460,278.5 459.25,280.1 458.5,278.3 457.75,280.2 457,282.0 456.25,280.2 455.5,293.0 454.75,287.9 454,278.4 453.25,277.7 452.5,277.5 451.75,276.7 451,277.3 450.25,280.0 449.5,279.9 448.75,279.6 448,281.2 447.25,279.4 446.5,275.7 445.75,275.9 445,276.4 444.25,275.2 443.5,275.5 442.75,278.7 442,279.3 441.25,276.7 440.5,278.3 439.75,282.1 439,281.8 438.25,282.5 437.5,280.2 436.75,281.8 436,284.1 435.25,280.8 434.5,282.9 433.75,285.4 433,281.2 432.25,279.8 431.5,278.9 430.75,277.0 430,277.0 429.25,277.9 428.5,278.5 427.75,277.8 427,277.4 426.25,280.2 425.5,280.3 424.75,281.4 424,278.4 423.25,278.5 422.5,280.2 421.75,282.6 421,282.9 420.25,280.1 419.5,281.2 418.75,282.5 418,282.8 417.25,284.1 416.5,283.6 415.75,281.1 415,282.6 414.25,282.0 413.5,277.5 412.75,277.4 412,276.0 411.25,276.0 410.5,276.5 409.75,278.3 409,277.5 408.25,277.7 407.5,278.4 406.75,280.0 406,279.8 405.25,283.8 404.5,281.8 403.75,283.1 403,284.1 402.25,281.0 401.5,277.3 400.75,276.9 400,275.0 399.25,273.9 398.5,275.7 397.75,275.4 397,274.7 396.25,275.6 395.5,277.0 394.75,279.8 394,280.8 393.25,280.0 392.5,279.4 391.75,284.3 391,282.4 390.25,288.6 389.5,279.9 388.75,280.4 388,276.9 387.25,274.8 386.5,275.4 385.75,275.5 385,275.2 384.25,276.3 383.5,277.5 382.75,276.7 382,280.7 381.25,278.5 380.5,280.6 379.75,279.7 379,276.7 378.25,275.5 377.5,274.9 376.75,276.3 376,275.3 375.25,274.5 374.5,274.9 373.75,276.5 373,276.5 372.25,276.7 371.5,276.7 370.75,278.4 370,277.2 369.25,281.9 368.5,278.8 367.75,279.9 367,283.4 366.25,281.1 365.5,280.6 364.75,279.5 364,278.2 363.25,283.6 362.5,280.1 361.75,282.5 361,286.2 360.25,283.9 359.5,283.4 358.75,284.2 358,284.7 357.25,289.3 356.5,287.8 355.75,283.1 355,283.6 354.25,278.1 353.5,280.0 352.75,277.8 352,277.4 351.25,279.9 350.5,279.5 349.75,278.6 349,280.0 348.25,280.2 347.5,277.1 346.75,275.9 346,274.6 345.25,275.1 344.5,275.4 343.75,275.4 343,276.8 342.25,277.6 341.5,278.4 340.75,279.2 340,278.8 339.25,279.2 338.5,279.8 337.75,279.9 337,280.3 336.25,280.5 335.5,281.2 334.75,283.2 334,281.0 333.25,278.7 332.5,280.1 331.75,277.6 331,275.8 330.25,275.6 329.5,275.0 328.75,276.4 328,275.7 327.25,278.5 326.5,279.8 325.75,280.1 325,279.1 324.25,275.7 323.5,275.1 322.75,275.2 322,275.9 321.25,275.8 320.5,279.3 319.75,280.1 319,279.5 318.25,282.4 317.5,281.1 316.75,281.2 316,277.2 315.25,276.2 314.5,275.3 313.75,275.4 313,275.9 312.25,274.4 311.5,276.7 310.75,275.3 310,276.0 309.25,276.2 308.5,290.0 307.75,279.7 307,274.4 306.25,276.0 305.5,277.6 304.75,278.2 304,279.9 303.25,285.5 302.5,280.9 301.75,278.5 301,276.6 300.25,274.2 299.5,274.3 298.75,277.5 298,278.2 297.25,281.4 296.5,280.5 295.75,283.7 295,287.3 294.25,285.0 293.5,281.3 292.75,276.8 292,275.7 291.25,274.3 290.5,275.9 289.75,275.0 289,274.3 288.25,275.0 287.5,277.0 286.75,279.2 286,279.9 285.25,281.3 284.5,282.9 283.75,286.1 283,283.2 282.25,277.1 281.5,275.5 280.75,276.9 280,276.3 279.25,277.4 278.5,277.4 277.75,281.4 277,279.0 276.25,279.4 275.5,279.1 274.75,278.5 274,278.7 273.25,281.0 272.5,278.3 271.75,278.1 271,279.7 270.25,280.2 269.5,279.6 268.75,287.0 268,283.8 267.25,283.0 266.5,282.0 265.75,284.1 265,281.4 264.25,278.4 263.5,280.5 262.75,279.7 262,281.7 261.25,279.1 260.5,278.4 259.75,278.8 259,277.1 258.25,277.3 257.5,277.0 256.75,274.4 256,276.1 255.25,276.0 254.5,277.1 253.75,280.3 253,285.3 252.25,285.5 251.5,282.1 250.75,283.1 250,283.2 249.25,283.1 248.5,278.6 247.75,282.5 247,278.6 246.25,281.9 245.5,281.2 244.75,282.0 244,281.6 243.25,281.2 242.5,278.5 241.75,279.3 241,275.8 240.25,275.5 239.5,274.9 238.75,276.6 238,274.8 237.25,274.8 236.5,275.5 235.75,275.3 235,276.1 234.25,276.5 233.5,278.4 232.75,277.4 232,279.8 231.25,281.4 230.5,279.1 229.75,280.0 229,283.2 228.25,282.7 227.5,277.8 226.75,279.2 226,276.3 225.25,284.6 224.5,288.0 223.75,279.9 223,284.7 222.25,293.0 221.5,282.9 220.75,279.7 220,279.1 219.25,282.0 218.5,281.2 217.75,277.8 217,280.5 216.25,284.0 215.5,283.0 214.75,279.0 214,283.8 213.25,286.0 212.5,283.2 211.75,295.0 211,292.8 210.25,282.2 209.5,277.4 208.75,278.9 208,281.6 207.25,284.0 206.5,283.4 205.75,282.8 205,289.0 204.25,286.6 203.5,292.0 202.75,295.0 202,312.0 201.25,308.1 200.5,291.5 199.75,283.3 199,283.1 198.25,282.5 197.5,278.1 196.75,278.4 196,281.0 195.25,278.0 194.5,279.3 193.75,280.6 193,280.6 192.25,288.0 191.5,285.7 190.75,279.1 190,281.0 189.25,284.1 188.5,282.3 187.75,281.2 187,283.2 186.25,283.1 185.5,282.3 184.75,286.7 184,282.2 183.25,287.0 182.5,280.9 181.75,278.6 181,278.8 180.25,277.5 179.5,280.8 178.75,279.7 178,278.8 177.25,280.2 176.5,285.9 175.75,280.9 175,280.4 174.25,279.9 173.5,276.2 172.75,275.0 172,275.8 171.25,274.7 170.5,275.6 169.75,275.7 169,278.6 168.25,280.2 167.5,282.4 166.75,281.6 166,283.3 165.25,282.8 164.5,280.8 163.75,280.5 163,275.0 162.25,275.9 161.5,275.2 160.75,275.8 160,276.9 159.25,275.6 158.5,276.2 157.75,278.5 157,276.0 156.25,278.3 155.5,280.4 154.75,278.9 154,280.9 153.25,281.6 152.5,279.7 151.75,284.9 151,282.0 150.25,283.7 149.5,284.3 148.75,279.9 148,281.1 147.25,282.4 146.5,278.1 145.75,277.4 145,278.7 144.25,279.8 143.5,280.6 142.75,282.2 142,280.7 141.25,285.9 140.5,281.4 139.75,285.7 139,280.7 138.25,281.6 137.5,282.9 136.75,281.7 136,278.0 135.25,280.0 134.5,281.3 133.75,278.8 133,277.7 132.25,279.5 131.5,280.0 130.75,278.3 130,281.2 129.25,278.7 128.5,279.8 127.75,276.4 127,276.6 126.25,278.5 125.5,279.2 124.75,278.8 124,278.4 123.25,278.0 122.5,281.1 121.75,281.8 121,280.8 120.25,281.6 119.5,283.6 118.75,280.7 118,281.6 117.25,277.3 116.5,276.3 115.75,275.1 115,275.8 114.25,275.0 113.5,276.0 112.75,275.3 112,275.6 111.25,275.2 110.5,275.0 109.75,276.4 109,274.5 108.25,274.6 107.5,276.3 106.75,276.8 106,278.5 105.25,280.2 104.5,279.2 103.75,281.1 103,277.0 102.25,275.4 101.5,275.2 100.75,274.8 100,274.1 99.25,275.2 98.5,275.1 97.75,274.2 97,274.3 96.25,274.3 95.5,275.8 94.75,275.3 94,274.5 93.25,275.1 92.5,275.2 91.75,276.0 91,276.3 90.25,277.9 89.5,278.7 88.75,279.5 88,277.5 87.25,275.5 86.5,274.8 85.75,275.1 85,275.0 84.25,274.0 83.5,275.8 82.75,274.9 82,275.7 81.25,274.4 80.5,277.1 79.75,277.0 79,281.6 78.25,280.2 77.5,282.2 76.75,279.0 76,279.4 75.25,275.8 74.5,275.4 73.75,275.4 73,274.0 72.25,274.4 71.5,274.7 70.75,275.5 70,274.6 69.25,274.2 68.5,274.1 67.75,274.0 67,274.8 66.25,275.3 65.5,275.3 64.75,274.9 64,274.5 63.25,274.6 62.5,274.9Z"/></svg>
<div class="a" style="left:62px;top:205px;width:1px;height:108px;background:#1a1a1a"></div>
<!-- tooltip -->
<div class="a" style="left:350px;top:304.500px;width:445px;height:27px;border-radius:4px;background:#45474a;color:#fff;font-size:13.500px;line-height:27px;padding-left:12.500px"><span style="color:#e8823c;font-weight:bold;margin-right:5.500px">Jan:</span>Dzień dobry wszystkim, zacznijmy od aktualizacji Projektu Alpha.</div>
<!-- slider -->
<div class="a" style="left:39px;top:350px;font-size:11px;line-height:14px;color:#999;letter-spacing:2.200px">00:00</div>
<div class="a" style="left:104px;top:353px;width:939px;height:8px;border-radius:4px;background:#ececec;border:1px solid #cfcfcf"></div>
<div class="a" style="left:102px;top:349.500px;width:16px;height:16px;border-radius:50%;background:#2f6df0"></div>
<div class="a" style="left:1058px;top:350px;font-size:11px;line-height:14px;color:#999;letter-spacing:2.200px">−00:08</div>
<!-- controls -->
<div class="a" style="left:342.200px;top:375.300px;width:48px;height:48px;border-radius:50%;background:#4b7eea"></div>
<svg style="left:360.200px;top:391.200px" width="14" height="17" viewBox="0 0 14 17"><path d="M1 0.500L13.500 8.500L1 16.500z" fill="#222"/></svg>
<svg style="left:0;top:0" width="1920" height="1080"><path d="M264.4 394.5A5.9 5.9 0 1 1 258.5 400.4" fill="none" stroke="#222" stroke-width="1.350"/><path d="M261.5 394.4L265.0 391.8L265.0 397.0z" fill="#222"/><text x="264.4" y="402.79999999999995" text-anchor="middle" font-family="Liberation Sans, sans-serif" font-weight="bold" font-size="6.500" letter-spacing="-0.300" fill="#222">30</text></svg>
<svg style="left:0;top:0" width="1920" height="1080"><path d="M312.4 394.5A5.9 5.9 0 1 1 306.5 400.4" fill="none" stroke="#222" stroke-width="1.350"/><path d="M309.5 394.4L313.0 391.8L313.0 397.0z" fill="#222"/><text x="312.4" y="402.79999999999995" text-anchor="middle" font-family="Liberation Sans, sans-serif" font-weight="bold" font-size="6.500" letter-spacing="-0.300" fill="#222">10</text></svg>
<svg style="left:0;top:0" width="1920" height="1080"><path d="M420.6 394.5A5.9 5.9 0 1 0 426.5 400.4" fill="none" stroke="#222" stroke-width="1.350"/><path d="M423.5 394.4L420.0 391.8L420.0 397.0z" fill="#222"/><text x="420.6" y="402.79999999999995" text-anchor="middle" font-family="Liberation Sans, sans-serif" font-weight="bold" font-size="6.500" letter-spacing="-0.300" fill="#222">10</text></svg>
<svg style="left:0;top:0" width="1920" height="1080"><path d="M468.6 394.5A5.9 5.9 0 1 0 474.5 400.4" fill="none" stroke="#222" stroke-width="1.350"/><path d="M471.5 394.4L468.0 391.8L468.0 397.0z" fill="#222"/><text x="468.6" y="402.79999999999995" text-anchor="middle" font-family="Liberation Sans, sans-serif" font-weight="bold" font-size="6.500" letter-spacing="-0.300" fill="#222">30</text></svg>
<svg style="left:508px;top:393px" width="17" height="13" viewBox="0 0 17 13" fill="none" stroke="#222" stroke-width="1.300" stroke-linejoin="round" stroke-linecap="round"><path d="M0.900 4.300h3l4.200-3.300v11l-4.200-3.300h-3z"/><path d="M11.200 4.500c0.900 1.200 0.900 2.800 0 4"/><path d="M13.800 1.300c2.600 3 2.600 7.400 0 10.400"/></svg>

<div class="a" style="left:546px;top:385px;width:72.500px;height:29px;border-radius:10.500px;border:1px solid #c9d6f5;background:#fff"></div>
<div class="a" style="left:569.500px;top:391.500px;font-size:13px;line-height:16px;font-weight:bold;color:#222">1x</div>
<svg style="left:590px;top:398.200px" width="5.500" height="3.500" viewBox="0 0 7 4"><path d="M0 0h7L3.500 4z" fill="#333"/></svg>
<svg style="left:839.500px;top:394px" width="10.500" height="11.500" viewBox="0 0 12 12"><path d="M1 0.500v11M1 1h5.200l0.400 1.300h4.400v5.700H6.800L6.400 6.700H1z" fill="#222" stroke="#222" stroke-width="1.200"/></svg>
<div class="a" style="left:855.500px;top:391.500px;font-size:12px;line-height:17px;color:#333">Zaznacznik</div>
<div class="a" style="left:938px;top:385px;width:169px;height:29px;border-radius:14.500px;border:1px solid #c9d6f5;background:#fff;font-size:12.800px;line-height:27.500px;font-weight:bold;color:#222;text-align:center">Oznaczone wydarzenia</div>
<!-- speakers -->
<div class="a" style="left:46px;top:433px;font-size:9px;line-height:13px;color:#333">Speakers</div>
<div class="a" style="left:111px;top:431.400px;width:615px;height:14px;background:#da7f4b"></div>
<div class="a" style="left:726px;top:431.400px;width:381.500px;height:14px;background:#7d72e4"></div>

<!-- summary header -->
<svg style="left:47.300px;top:472.200px" width="9.800" height="9.800" viewBox="0 0 10 10" fill="none" stroke="#333" stroke-width="1.200"><rect x="0.600" y="0.600" width="8.800" height="8.800" rx="0.800"/><path d="M3 7.700v-1.800M5.100 7.700v-3.700M7.200 7.700v-5.300" stroke-width="1.100"/></svg>
<div class="a" style="left:65.500px;top:470px;font-size:11px;line-height:14px;font-weight:bold;color:#222">Podsumowanie sztucznej inteligencji</div>
<svg style="left:1061px;top:472px" width="8" height="8" viewBox="0 0 8 8" fill="none" stroke="#222" stroke-width="1.100"><path d="M0.700 7.300L7.300 0.700M2.500 0.700h4.800v4.800"/></svg>
<svg style="left:1085px;top:471px" width="10" height="10" viewBox="0 0 10 10" fill="none" stroke="#222" stroke-width="1.100"><path d="M0.700 9.300L9.300 0.700M5.800 0.700h3.500v3.500M0.700 5.800v3.500h3.500"/></svg>
<!-- tabs -->
<div class="a" style="left:60px;top:500px;font-size:12px;line-height:16px;color:#3f9aa5">Transkrypcja</div>
<div class="a" style="left:156px;top:500px;font-size:12px;line-height:16px;color:#9a9a9a">Streszczenie</div>
<div class="a" style="left:253px;top:500px;font-size:12px;line-height:16px;color:#9a9a9a">Działania</div>
<div class="a" style="left:330px;top:500px;font-size:12px;line-height:16px;color:#9a9a9a">Decyzje</div>
<div class="a" style="left:401px;top:500px;font-size:12px;line-height:16px;color:#9a9a9a">Rozdziały</div>
<div class="ln" style="left:38px;top:525px;width:1069px;height:1px"></div>
<div class="a" style="left:46px;top:523px;width:96px;height:2px;background:#3f9aa5"></div>
<!-- export buttons -->
<div class="btn" style="left:944px;top:499px;width:36px;height:20.400px;border-radius:5px;font-size:11px">MD</div>
<div class="btn" style="left:981px;top:499px;width:41px;height:20.400px;border-radius:5px;font-size:11px">SRT</div>
<div class="btn" style="left:1023px;top:499px;width:48px;height:20.400px;border-radius:5px;font-size:11px">JSON</div>
<div class="btn" style="left:1072px;top:499px;width:27px;height:20.400px;border-radius:5px"></div>
<svg style="left:1081px;top:504px" width="9" height="10" viewBox="0 0 9 10" fill="none" stroke="#999" stroke-width="1.100"><path d="M7.800 3.200A3.700 3.700 0 1 0 8.200 6"/><path d="M8.300 0.800v2.700h-2.700" /></svg>
<div class="btn" style="left:1027.500px;top:538px;width:64.500px;height:20.600px;border-radius:5px;font-size:11px;justify-content:flex-start;padding-left:25px">Kopia</div>
<svg style="left:1038px;top:543px" width="10" height="10" viewBox="0 0 10 10"><rect x="3" y="0.300" width="6.500" height="7.500" rx="1" fill="#999"/><path d="M1.200 2.300v6.900h5.800" fill="none" stroke="#999" stroke-width="1.100"/></svg>
<!-- speakers table -->
<div class="a" style="left:54px;top:566.400px;width:1038px;height:132px;border:1px solid #c9d6f5;border-radius:8px;background:#f5f8ff;overflow:hidden"><div style="height:30.600px;background:#fff"></div></div>
<div class="a" style="left:65px;top:577px;font-size:11px;line-height:14px;font-weight:bold;color:#9a9a9a;letter-spacing:0.600px">MÓWCY</div>
<div class="ln" style="left:55px;top:597px;width:1036px;height:1px"></div>
<div class="ln" style="left:55px;top:630.800px;width:1036px;height:1px"></div>
<div class="ln" style="left:55px;top:664px;width:1036px;height:1px"></div>
<div class="a" style="left:65px;top:610.500px;width:8px;height:8px;border-radius:50%;background:#dc6f2e"></div>
<div class="a" style="left:65px;top:643.500px;width:8px;height:8px;border-radius:50%;background:#6a57e0"></div>
<div class="a" style="left:65px;top:677px;width:8px;height:8px;border-radius:50%;background:#2461d6"></div>
<div class="a" style="left:81px;top:606.500px;font-size:12px;line-height:16px;color:#333">Jan</div>
<div class="a" style="left:81px;top:639.500px;font-size:12px;line-height:16px;color:#333">Anna</div>
<div class="a" style="left:81px;top:673.500px;font-size:12px;line-height:16px;color:#333">Piotr</div>
<div class="btn" style="left:999px;top:604px;width:82px;height:21px;border-radius:4px;font-size:11px;justify-content:flex-start;padding-left:10px">Scal do…</div>
<svg style="left:1067px;top:612px" width="9" height="5" viewBox="0 0 9 5" fill="none" stroke="#555" stroke-width="1.100"><path d="M0.500 0.500L4.500 4.300L8.500 0.500"/></svg>
<div class="btn" style="left:999px;top:637.500px;width:82px;height:21px;border-radius:4px;font-size:11px;justify-content:flex-start;padding-left:10px">Scal do…</div>
<svg style="left:1067px;top:645.500px" width="9" height="5" viewBox="0 0 9 5" fill="none" stroke="#555" stroke-width="1.100"><path d="M0.500 0.500L4.500 4.300L8.500 0.500"/></svg>
<div class="btn" style="left:999px;top:671px;width:82px;height:21px;border-radius:4px;font-size:11px;justify-content:flex-start;padding-left:10px">Scal do…</div>
<svg style="left:1067px;top:679px" width="9" height="5" viewBox="0 0 9 5" fill="none" stroke="#555" stroke-width="1.100"><path d="M0.500 0.500L4.500 4.300L8.500 0.500"/></svg>


<!-- transcript -->
<div class="a" style="left:54px;top:710.3px;width:33px;height:17px;border:1px solid #dc7a3e;border-radius:8.500px;color:#dc7a3e;font-size:11px;line-height:15px;font-weight:bold;text-align:center">Jan</div>
<div class="a dmono" style="left:99px;top:712px;font-size:11px;line-height:15px;color:#a0a0a0">00:00</div>
<div class="a" style="left:58px;top:732px;font-size:13px;line-height:16px;color:#333">Dzień dobry wszystkim, zacznijmy od aktualizacji Projektu Alpha.</div>
<div class="a" style="left:54px;top:761.3px;width:42px;height:17px;border:1px solid #6f5fe6;border-radius:8.500px;color:#6f5fe6;font-size:11px;line-height:15px;font-weight:bold;text-align:center">Anna</div>
<div class="a dmono" style="left:108px;top:763px;font-size:11px;line-height:15px;color:#a0a0a0">00:05</div>
<div class="a" style="left:58px;top:783px;font-size:13px;line-height:16px;color:#333">Dziękuję Jan. Jeśli chodzi o harmonogram, napotkaliśmy problem z integracją frontendu, więc wydanie beta opóźni się o dwa tygodnie.</div>
<div class="a" style="left:54px;top:812.3px;width:39px;height:17px;border:1px solid #2b66d9;border-radius:8.500px;color:#2b66d9;font-size:11px;line-height:15px;font-weight:bold;text-align:center">Piotr</div>
<div class="a dmono" style="left:105px;top:814px;font-size:11px;line-height:15px;color:#a0a0a0">00:15</div>
<div class="a" style="left:58px;top:834px;font-size:13px;line-height:16px;color:#333">Po stronie technicznej, opóźnienie API jest wyższe niż oczekiwano. Możemy potrzebować skalowania instancji, co wpłynie na miesięczny budżet o około dziesięć procent.</div>
<div class="a" style="left:54px;top:863.3px;width:33px;height:17px;border:1px solid #dc7a3e;border-radius:8.500px;color:#dc7a3e;font-size:11px;line-height:15px;font-weight:bold;text-align:center">Jan</div>
<div class="a dmono" style="left:99px;top:865px;font-size:11px;line-height:15px;color:#a0a0a0">00:25</div>
<div class="a" style="left:58px;top:885px;font-size:13px;line-height:16px;color:#333">Rozumiem. Zatwierdźmy zwiększenie budżetu i celujmy w nowy termin. Spotkanie zakończone.</div>

<!-- divider -->
<div class="a" style="left:1109.600px;top:178.500px;width:2px;height:864px;background:#dcdfe7;border-radius:2px"></div>
<!-- agent header -->
<svg style="left:1121px;top:189px" width="15" height="12" viewBox="0 0 15 12" fill="none" stroke="#222" stroke-width="1.200"><rect x="3.700" y="3.400" width="7.700" height="6.800" rx="1"/><path d="M7.500 3.400V1.500" stroke-linecap="round"/><path d="M3.100 5.100L1 6.800L3.100 8.500zM12 5.100L14.100 6.800L12 8.500z" fill="#222" stroke="none"/><circle cx="6" cy="5.900" r="0.750" fill="#222" stroke="none"/><circle cx="9.100" cy="5.900" r="0.750" fill="#222" stroke="none"/><path d="M6 8.200H9.100" stroke-width="1"/></svg>
<div class="a" style="left:1141px;top:188px;font-size:11px;line-height:14px;font-weight:bold;color:#222">Agent AI i współpraca</div>
<svg style="left:1836px;top:190px" width="8" height="8" viewBox="0 0 8 8" fill="none" stroke="#222" stroke-width="1.100"><path d="M7.300 0.700L0.700 7.300M0.700 2.500v4.800h4.800"/></svg>
<svg style="left:1859px;top:189px" width="10" height="10" viewBox="0 0 10 10" fill="none" stroke="#222" stroke-width="1.100"><path d="M0.700 9.300L9.300 0.700M5.800 0.700h3.500v3.500M0.700 5.800v3.500h3.500"/></svg>
<!-- agent card -->
<div class="a" style="left:1113px;top:211px;width:769px;height:831px;border-radius:12px;background:#fff"></div>
<div class="a" style="left:1113px;top:254px;width:769px;height:34px;background:#f5f8ff"></div>
<div class="ln" style="left:1113px;top:253px;width:769px;height:1px"></div>
<div class="ln" style="left:1113px;top:288px;width:769px;height:1px"></div>
<div class="ln" style="left:1113px;top:914px;width:769px;height:1px"></div>
<div class="ln" style="left:1113px;top:953px;width:769px;height:2px;background:#d3ddf7"></div>
<div class="ln" style="left:1113px;top:989px;width:769px;height:1px"></div>
<!-- context row -->
<svg style="left:1128px;top:226px" width="13" height="12" viewBox="0 0 13 12"><path d="M6.500 0.300a1 1 0 0 1 1 1v0.900h1.700a2 2 0 0 1 2 2v1.300h0.600a0.700 0.700 0 0 1 0.700 0.700v1.600a0.700 0.700 0 0 1-0.700 0.700h-0.600v1a2 2 0 0 1-2 2H3.800a2 2 0 0 1-2-2v-1H1.200a0.700 0.700 0 0 1-0.700-0.700V6.200a0.700 0.700 0 0 1 0.700-0.700h0.600V4.200a2 2 0 0 1 2-2h1.700V1.300a1 1 0 0 1 1-1z" fill="#222"/><circle cx="4.700" cy="5.600" r="1" fill="#fff"/><circle cx="8.300" cy="5.600" r="1" fill="#fff"/><rect x="4.300" y="8" width="4.400" height="1.100" rx="0.500" fill="#fff"/></svg>
<div class="a" style="left:1150px;top:225px;font-size:13px;line-height:16px;font-weight:bold;color:#222">Kontekst: Demo_Transcription_pl_20260330090008.webm</div>
<div class="btn" style="left:1834px;top:221px;width:34px;height:22px;border-radius:5px"></div>
<svg style="left:1847px;top:228px" width="8" height="8" viewBox="0 0 8 8" stroke="#aaa" stroke-width="1.100"><path d="M4 0v8M0 4h8"/></svg>
<!-- sessions row -->
<div class="a" style="left:1123.500px;top:264px;font-size:11px;line-height:14px;color:#aaa">Sesje</div>
<div class="a" style="left:1157px;top:260px;width:305px;height:22px;border:1px solid #c9d6f5;border-radius:5px;background:#f5f8ff;font-size:12px;line-height:20px;color:#333;padding-left:8px">Nie ma jeszcze sesji. Rozpocznij rozmowę poniżej.</div>
<svg style="left:1443px;top:269px" width="7" height="4" viewBox="0 0 7 4" fill="none" stroke="#888" stroke-width="1"><path d="M0.500 0.500L3.500 3.300L6.500 0.500"/></svg>
<div class="a" style="left:1781px;top:261px;width:91px;height:21px;border:1px solid #3f9aa5;border-radius:5px;color:#3f9aa5;font-size:11px;line-height:19px;padding-left:24.500px">Nowa sesja</div>
<svg style="left:1791.500px;top:267px" width="8" height="8" viewBox="0 0 8 8" stroke="#3f9aa5" stroke-width="1.100"><path d="M4 0v8M0 4h8"/></svg>
<!-- empty state -->
<svg style="left:1481px;top:550px" width="33" height="32" viewBox="0 0 24 24"><path d="M12 1.300c.8 0 1.600.4 2 1.200l2.300 4.500 5 .7c1.800.3 2.600 2.500 1.300 3.800l-3.600 3.600.8 5c.3 1.800-1.600 3.200-3.300 2.400L12 20.100l-4.500 2.400c-1.700.8-3.600-.6-3.300-2.400l.8-5-3.600-3.600C.1 10.200.9 8 2.700 7.700l5-.7L10 2.500c.4-.8 1.200-1.200 2-1.200z" fill="#b7d9df"/><circle cx="9.400" cy="10.800" r="1.400" fill="#fff"/><circle cx="14.600" cy="10.800" r="1.400" fill="#fff"/><path d="M8.700 13.800h6.600c-.3 1.800-1.700 3-3.300 3s-3-1.200-3.300-3z" fill="#fff"/></svg>
<div class="a" style="left:1113px;top:596px;width:769px;text-align:center;font-size:14px;line-height:18px;font-weight:bold;color:#2b2b2b">Agent AI</div>
<div class="a" style="left:1113px;top:627px;width:769px;text-align:center;font-size:11.900px;line-height:15px;color:#9a9a9a">Polecenia: /nowy · /wyczyść · /koszt · /pomoc</div>
<!-- suggestion chips -->
<div class="btn" style="left:1125.500px;top:923px;width:145px;height:22.500px;border-radius:11px;background:#fff;font-size:11px;justify-content:flex-start;padding-left:26px">Podsumuj to nagranie</div>
<svg style="left:1138px;top:929.500px" width="9" height="10" viewBox="0 0 9 10"><path d="M0.500 1.500a1 1 0 0 1 1-1H5.800L8.500 3.200V8.500a1 1 0 0 1-1 1h-6a1 1 0 0 1-1-1z" fill="#999"/><path d="M5.600 0.700v2.700h2.700" fill="none" stroke="#fff" stroke-width="0.700"/></svg>
<div class="btn" style="left:1276.500px;top:923px;width:144px;height:22.500px;border-radius:11px;background:#fff;font-size:11px;justify-content:flex-start;padding-left:26px">Znajdź elementy akcji</div>
<svg style="left:1288px;top:929px" width="11" height="11" viewBox="0 0 11 11" fill="none" stroke="#999" stroke-width="1.100" stroke-linecap="round"><path d="M9.600 4.700A4.300 4.300 0 1 1 7.300 1.500"/><path d="M3.600 5.300l1.700 1.700L10 2.200"/></svg>
<div class="btn" style="left:1426.500px;top:923px;width:193px;height:22.500px;border-radius:11px;background:#fff;font-size:11px;justify-content:flex-start;padding-left:26px">Projekt e-maila uzupełniającego</div>
<svg style="left:1438.500px;top:930.500px" width="10" height="8" viewBox="0 0 10 8"><rect x="0" y="0" width="10" height="8" rx="1.200" fill="#999"/><path d="M1 1.700L5 4.500L9 1.700" fill="none" stroke="#fff" stroke-width="0.900"/></svg>
<!-- mode row -->
<div class="btn" style="left:1123px;top:961.200px;width:69px;height:20.800px;border-radius:8px;background:#fff;font-size:11px;justify-content:flex-start;padding-left:8px">Claude</div>
<svg style="left:1174px;top:970px" width="7" height="4" viewBox="0 0 7 4" fill="none" stroke="#999" stroke-width="1"><path d="M0.500 0.500L3.500 3.300L6.500 0.500"/></svg>
<div class="a" style="left:1201px;top:960.500px;width:148px;height:22.500px;border-radius:7px;background:#f2f5fe"></div>
<div class="a" style="left:1203px;top:962.500px;width:58px;height:18.500px;border-radius:5px;background:#fff;box-shadow:0 1px 2px rgba(0,0,0,0.120);font-size:11px;line-height:19px;color:#222;text-align:center">Zapytać</div>
<div class="a" style="left:1273px;top:962.500px;font-size:11px;line-height:19px;color:#9a9a9a">Kod</div>
<div class="a" style="left:1315px;top:962.500px;font-size:11px;line-height:19px;color:#9a9a9a">Plan</div>
<div class="a" style="left:1552px;top:961.300px;width:103px;height:21px;border-radius:10.500px;background:#4b9ca6;color:#fff;font-size:11px;line-height:22.500px;text-align:center">Claude Haiku 4.5</div>
<div class="btn" style="left:1659px;top:961.300px;width:109px;height:21px;border-radius:10.500px;background:#fff;font-size:11px">Claude Sonnet 4.6</div>
<div class="btn" style="left:1772px;top:961.300px;width:100px;height:21px;border-radius:10.500px;background:#fff;font-size:11px">Claude Opus 4.6</div>
<!-- input row -->
<div class="a" style="left:1124px;top:998px;width:704px;height:36px;border:1px solid #c9d6f5;border-radius:8px;background:#fff;font-size:13px;line-height:34px;color:#9a9a9a;padding-left:10px">Zapytaj o cokolwiek... (Enter, aby wysłać, Shift+Enter, aby przejść do nowej linii)</div>
<div class="a" style="left:1836px;top:998px;width:36px;height:36px;border-radius:8px;background:linear-gradient(135deg,#c4d4f8,#cbd1f7)"></div>
<svg style="left:1847px;top:1009px" width="15" height="13" viewBox="0 0 15 13"><path d="M0.300 0.300L14.700 6.500L0.300 12.700L2.800 6.500z" fill="#fff"/></svg>

</body>
</html>
